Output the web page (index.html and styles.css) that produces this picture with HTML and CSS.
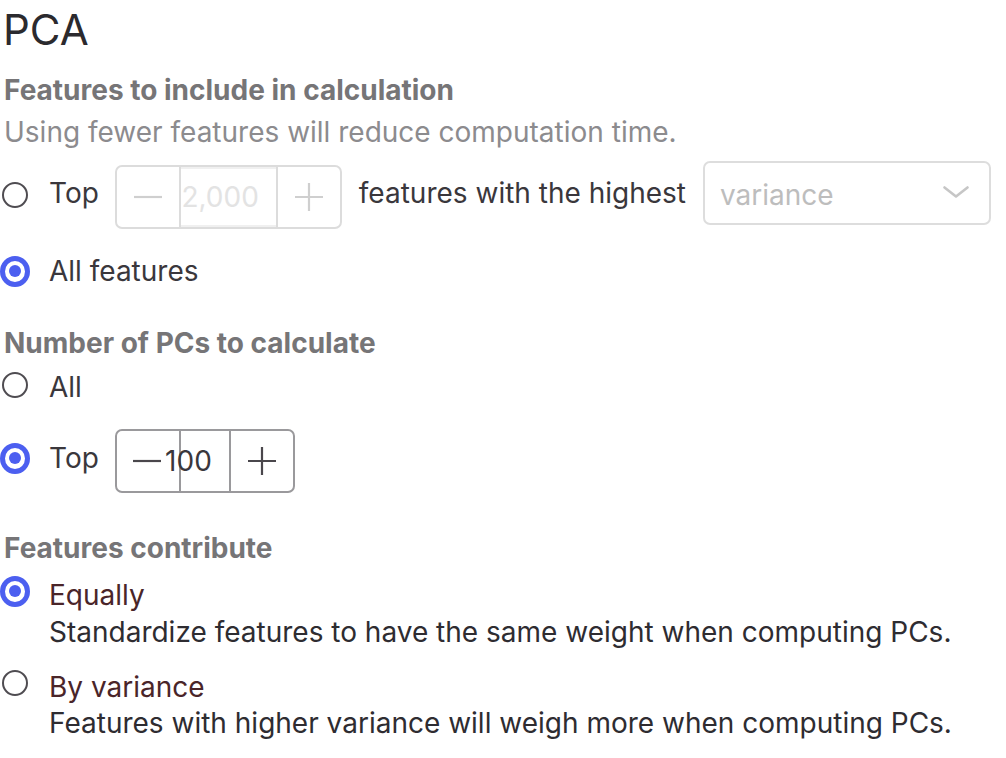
FILE: index.html
```html
<!DOCTYPE html>
<html lang="en">
<head>
<meta charset="utf-8">
<title>PCA</title>
<link rel="stylesheet" href="styles.css">
</head>
<body>
<main class="panel">
  <h1 class="title">PCA</h1>

  <section class="group">
    <h2 class="group-title">Features to include in calculation</h2>
    <p class="group-hint">Using fewer features will reduce computation time.</p>

    <div class="row row-top">
      <span class="radio"></span>
      <span class="label">Top</span>
      <div class="stepper stepper-disabled">
        <span class="step-btn"><svg width="28" height="4" viewBox="0 0 28 4"><path d="M0 2H28" stroke="currentColor" stroke-width="2.2"/></svg></span>
        <span class="step-value">2,000</span>
        <span class="step-btn"><svg width="28" height="28" viewBox="0 0 28 28"><path d="M0 14H28M14 0V28" stroke="currentColor" stroke-width="2.2"/></svg></span>
      </div>
      <span class="label">features with the highest</span>
      <div class="select">
        <span class="select-value">variance</span>
        <svg class="chevron" width="26" height="12" viewBox="0 0 26 12"><path d="M1.5 1.5L13 10.5L24.5 1.5" fill="none" stroke="currentColor" stroke-width="2.6" stroke-linecap="round" stroke-linejoin="round"/></svg>
      </div>
    </div>

    <div class="row row-all">
      <span class="radio radio-checked"></span>
      <span class="label">All features</span>
    </div>
  </section>

  <section class="group group-pcs">
    <h2 class="group-title">Number of PCs to calculate</h2>
    <div class="row row-pcs-all">
      <span class="radio"></span>
      <span class="label">All</span>
    </div>
    <div class="row row-pcs-top">
      <span class="radio radio-checked"></span>
      <span class="label">Top</span>
      <div class="stepper stepper-active">
        <span class="step-btn"><svg width="28" height="4" viewBox="0 0 28 4"><path d="M0 2H28" stroke="currentColor" stroke-width="2.2"/></svg></span>
        <span class="step-value">100</span>
        <span class="step-btn"><svg width="28" height="28" viewBox="0 0 28 28"><path d="M0 14H28M14 0V28" stroke="currentColor" stroke-width="2.2"/></svg></span>
      </div>
    </div>
  </section>

  <section class="group group-contrib">
    <h2 class="group-title">Features contribute</h2>
    <div class="option option-first">
      <span class="radio radio-checked"></span>
      <div class="option-body">
        <span class="option-label">Equally</span>
        <span class="option-desc">Standardize features to have the same weight when computing PCs.</span>
      </div>
    </div>
    <div class="option option-second">
      <span class="radio"></span>
      <div class="option-body">
        <span class="option-label">By variance</span>
        <span class="option-desc">Features with higher variance will weigh more when computing PCs.</span>
      </div>
    </div>
  </section>
</main>
</body>
</html>
```

FILE: styles.css
```css
html, body {
  margin: 0;
  padding: 0;
  background: #ffffff;
}

body {
  font-family: Inter, "Noto Sans", "Liberation Sans", sans-serif;
  font-size: 28px;
  line-height: 36px;
  color: #3a373c;
}

.panel {
  padding-top: 6px;
}

.title {
  margin: 0;
  padding-left: 3px;
  font-size: 42px;
  line-height: 48px;
  font-weight: 400;
  color: #2b2a2e;
}

.group-title {
  margin: 18px 0 0;
  padding-left: 4px;
  font-size: 28px;
  line-height: 36px;
  font-weight: 700;
  color: #767577;
}

.group-hint {
  margin: 6px 0 0;
  padding-left: 4px;
  color: #8c8b8e;
}

.row {
  display: flex;
  align-items: flex-start;
  gap: 19px;
}

/* first options row */
.row-top {
  margin-top: 11px;
  height: 68px;
}

.row-top .radio {
  margin-top: 19px;
}

.row-top .label {
  margin-top: 14px;
}

.row-top .stepper {
  margin-top: 4px;
  margin-left: -3px;
}

.row-top .stepper + .label {
  margin-left: -2px;
}

.row-top .select {
  margin-left: -2px;
}

.row-all {
  margin-top: 24px;
  align-items: center;
}

.group-pcs .group-title {
  margin-top: 36px;
}

.row-pcs-all {
  margin-top: 8px;
}

.row-pcs-all .radio {
  margin-top: 1px;
}

.row-pcs-top {
  margin-top: 24px;
}

.row-pcs-top .radio {
  margin-top: 14px;
}

.row-pcs-top .label {
  margin-top: 11px;
}

.row-pcs-top .stepper {
  margin-left: -3px;
}

/* radios */
.radio {
  flex: none;
  width: 30px;
  height: 30px;
  display: flex;
  align-items: center;
  justify-content: center;
  position: relative;
}

.radio::before {
  content: "";
  box-sizing: border-box;
  width: 26px;
  height: 26px;
  border-radius: 50%;
  border: 2px solid #4f4c51;
  background: #fff;
}

.radio-checked::before {
  width: 31px;
  height: 31px;
  border: 5px solid #4c5ff0;
}

.radio-checked::after {
  content: "";
  position: absolute;
  left: 50%;
  top: 50%;
  width: 12px;
  height: 12px;
  margin: -6px 0 0 -6px;
  border-radius: 50%;
  background: #4c5ff0;
}

.label {
  white-space: nowrap;
}

/* steppers */
.stepper {
  box-sizing: border-box;
  display: flex;
  height: 64px;
  border: 2px solid #dcdcdc;
  border-radius: 7px;
}

.step-btn {
  width: 62px;
  display: flex;
  align-items: center;
  justify-content: center;
  color: #cfcfcf;
}

.step-value {
  box-sizing: border-box;
  display: flex;
  align-items: center;
  justify-content: flex-end;
  padding-right: 17px;
  border-left: 2px solid #dcdcdc;
  border-right: 2px solid #dcdcdc;
  white-space: nowrap;
}

.stepper-disabled .step-value {
  width: 99px;
  color: #e3e3e3;
  box-shadow: inset 0 2px 0 #f0f0f0, inset 0 -2px 0 #f0f0f0;
}

.stepper-active {
  border-color: #9a999c;
}

.stepper-active .step-btn {
  color: #4a474c;
}

.stepper-active .step-value {
  width: 52px;
  border-color: #9a999c;
  color: #3a373c;
}

.stepper-active .step-btn:first-child {
  justify-content: flex-start;
  padding-left: 16px;
  box-sizing: border-box;
}

/* select */
.select {
  box-sizing: border-box;
  width: 288px;
  height: 64px;
  display: flex;
  align-items: center;
  justify-content: space-between;
  padding: 4px 20px 0 15px;
  border: 2px solid #dddddd;
  border-radius: 7px;
  color: #bdbdbd;
}

.chevron {
  color: #c6c6c6;
  margin-bottom: 6px;
}

/* options */
.group-contrib .group-title {
  margin-top: 37px;
}

.option {
  display: flex;
  align-items: flex-start;
  gap: 19px;
}

.option-first {
  margin-top: 11px;
}

.option-second {
  margin-top: 19px;
}

.option .radio {
  margin-top: -1px;
}

.option-body {
  display: flex;
  flex-direction: column;
}

.option-label {
  color: #4a2529;
}

.option-desc {
  margin-top: 1px;
  color: #2e2c31;
  white-space: nowrap;
}

.option-second .option-desc {
  margin-top: 0;
}
```
